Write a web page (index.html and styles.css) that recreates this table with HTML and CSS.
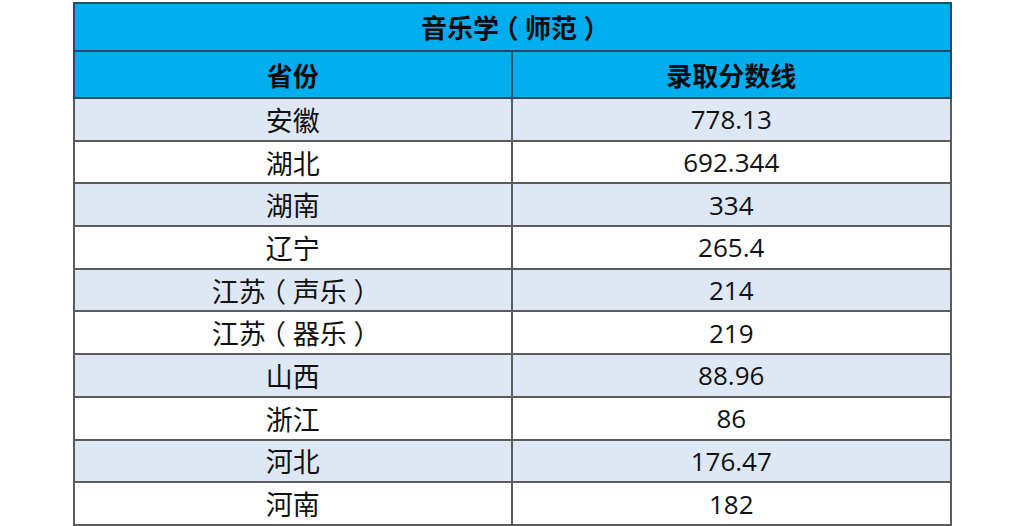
FILE: index.html
```html
<!DOCTYPE html>
<html lang="zh">
<head>
<meta charset="utf-8">
<link rel="stylesheet" href="styles.css">
</head>
<body>
<table class="score-table">
  <thead>
    <tr class="title-row"><th colspan="2">音乐学<span class="paren">（</span>师范<span class="paren">）</span></th></tr>
    <tr class="head-row"><th>省份</th><th>录取分数线</th></tr>
  </thead>
  <tbody>
    <tr class="alt"><td>安徽</td><td class="num">778.13</td></tr>
    <tr><td>湖北</td><td class="num">692.344</td></tr>
    <tr class="alt"><td>湖南</td><td class="num">334</td></tr>
    <tr><td>辽宁</td><td class="num">265.4</td></tr>
    <tr class="alt"><td>江苏<span class="paren">（</span>声乐<span class="paren">）</span></td><td class="num">214</td></tr>
    <tr><td>江苏<span class="paren">（</span>器乐<span class="paren">）</span></td><td class="num">219</td></tr>
    <tr class="alt"><td>山西</td><td class="num">88.96</td></tr>
    <tr><td>浙江</td><td class="num">86</td></tr>
    <tr class="alt"><td>河北</td><td class="num">176.47</td></tr>
    <tr><td>河南</td><td class="num">182</td></tr>
  </tbody>
</table>
</body>
</html>
```
FILE: styles.css
```css
html, body {
  margin: 0;
  padding: 0;
  background: #ffffff;
}

body {
  padding-top: 2px;
  font-family: "Noto Sans CJK SC", "Noto Sans", sans-serif;
  color: #111111;
}

.score-table {
  width: 879px;
  margin: 0 auto;
  border-collapse: collapse;
  table-layout: fixed;
  border: 2px solid #4f4f4f;
}

.score-table th,
.score-table td {
  border: 2px solid #5c5c5c;
  padding: 0;
  text-align: center;
  vertical-align: middle;
  font-size: 27px;
  line-height: 1;
}

.score-table th {
  background: #00adef;
  font-weight: 700;
  font-size: 26px;
  color: #0a0a0a;
  border-color: #264a66;
}

.title-row th {
  height: 46px;
}

.head-row th {
  height: 45px;
}

.score-table td {
  height: 40.7px;
  background: #ffffff;
}

.score-table tr.alt td {
  background: #dee8f4;
}

.score-table td.num {
  font-family: "Open Sans", "Noto Sans", sans-serif;
  font-size: 26px;
}

.paren {
  font-feature-settings: "halt";
  padding: 0 0.25em;
}
```
